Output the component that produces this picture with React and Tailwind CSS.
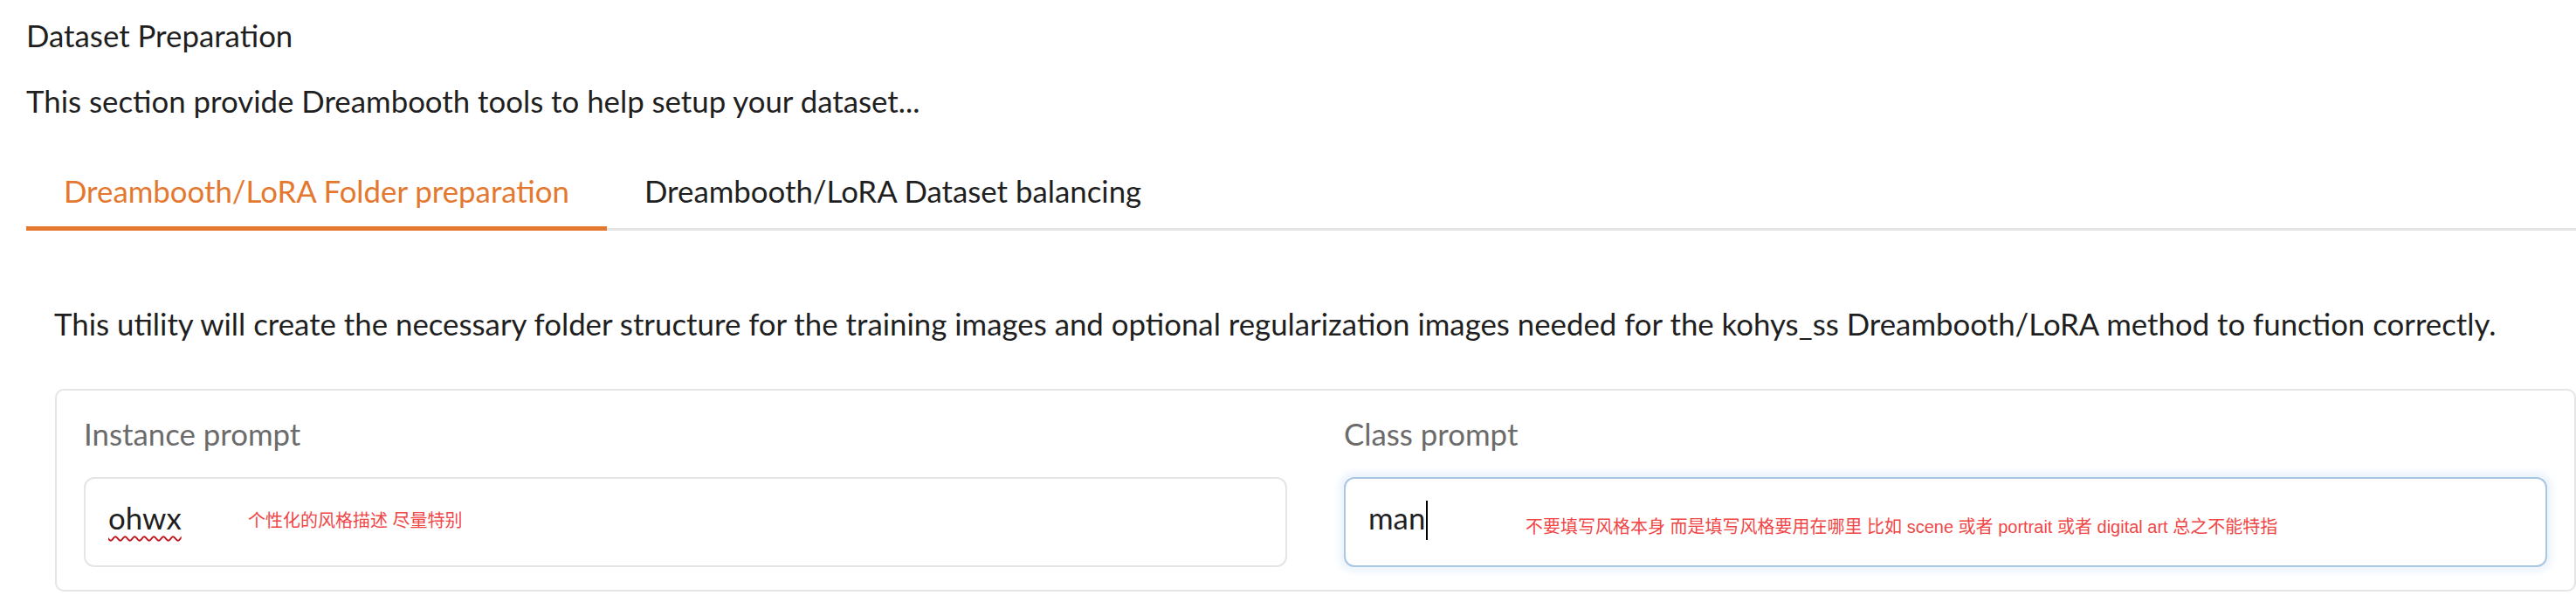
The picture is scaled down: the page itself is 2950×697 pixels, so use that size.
import React, { useState } from 'react';

const tabs = ['Dreambooth/LoRA Folder preparation', 'Dreambooth/LoRA Dataset balancing'];

const PromptField = ({ label, value, note, focused, wavy, noteWidth }) => (
  <div className="flex flex-col">
    <div className="text-[#6b6b6b]">{label}</div>
    <div
      className={`mt-[23px] flex h-[103px] items-start rounded-[12px] border-2 bg-white pl-[26px] pt-[19px] ${
        focused ? 'border-[#a9c6e3] shadow-[0_0_8px_6px_#edf4fc]' : 'border-[#e5e5e5]'
      }`}
    >
      <span className={`inline-flex shrink-0 ${noteWidth} items-center`}>
        <span
          className={
            wavy
              ? 'text-[#1f1f1f] underline decoration-[#c0141c] decoration-wavy decoration-2 underline-offset-[7px]'
              : 'text-[#1f1f1f]'
          }
        >
          {value}
        </span>
        {focused && <span className="ml-[1px] inline-block h-[45px] w-[2px] translate-y-[2px] bg-black" />}
      </span>
      <span
        className={`whitespace-nowrap font-['Liberation_Sans','Noto_Sans_CJK_SC',sans-serif] text-[20px] text-[#f04646] ${
          focused ? 'translate-y-[10px]' : 'translate-y-[3px]'
        }`}
      >
        {note}
      </span>
    </div>
  </div>
);

export default function App() {
  const [active, setActive] = useState(0);

  return (
    <div className="min-h-screen bg-white pl-[30px] pt-[15px] font-['Lato',sans-serif] text-[34.8px] leading-[52px] text-[#1f1f1f]">
      <div>Dataset Preparation</div>
      <p className="mt-[23px]">This section provide Dreambooth tools to help setup your dataset...</p>

      <div className="mt-[51px] flex border-b-[3px] border-[#e5e5e5]">
        {tabs.map((t, i) => (
          <button
            key={t}
            type="button"
            onClick={() => setActive(i)}
            className={`-mb-[3px] border-b-[5px] px-[43px] pb-[14px] ${
              active === i ? 'border-[#e4782f] text-[#e4782f]' : 'border-transparent text-[#1f1f1f]'
            }`}
          >
            {t}
          </button>
        ))}
      </div>

      <div className="pl-[32px]">
        <p className="mt-[81px]">
          This utility will create the necessary folder structure for the training images and optional regularization
          images needed for the kohys_ss Dreambooth/LoRA method to function correctly.
        </p>

        <div className="ml-[1px] mt-[48px] grid grid-cols-2 gap-x-[65px] rounded-[10px] border-2 border-[#e5e5e5] bg-white px-[31px] pb-[26px] pt-[24px]">
          <PromptField
            label="Instance prompt"
            value="ohwx"
            wavy
            noteWidth="w-[160px]"
            note="个性化的风格描述 尽量特别"
          />
          <PromptField
            label="Class prompt"
            value="man"
            focused
            noteWidth="w-[180px]"
            note="不要填写风格本身 而是填写风格要用在哪里 比如 scene 或者 portrait 或者 digital art 总之不能特指"
          />
        </div>
      </div>
    </div>
  );
}
